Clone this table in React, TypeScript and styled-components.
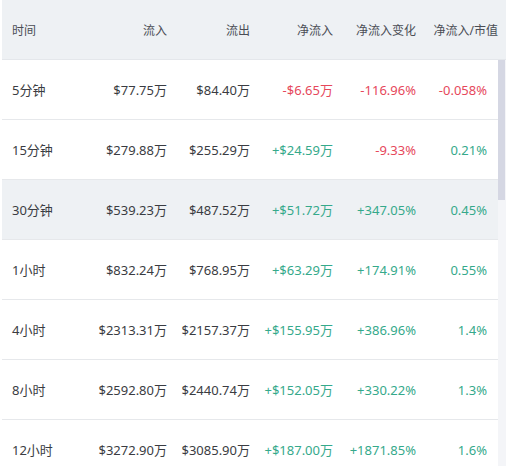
import React from 'react';
import styled, { createGlobalStyle } from 'styled-components';

type Tone = 'up' | 'down' | 'plain';

interface Flow {
    period: string;
    inflow: string;
    outflow: string;
    net: string;
    change: string;
    ratio: string;
    tone: Tone;
    changeTone?: Tone;
    active?: boolean;
}

const rows: Flow[] = [
    { period: '5分钟', inflow: '$77.75万', outflow: '$84.40万', net: '-$6.65万', change: '-116.96%', ratio: '-0.058%', tone: 'down' },
    { period: '15分钟', inflow: '$279.88万', outflow: '$255.29万', net: '+$24.59万', change: '-9.33%', ratio: '0.21%', tone: 'up', changeTone: 'down' },
    { period: '30分钟', inflow: '$539.23万', outflow: '$487.52万', net: '+$51.72万', change: '+347.05%', ratio: '0.45%', tone: 'up', active: true },
    { period: '1小时', inflow: '$832.24万', outflow: '$768.95万', net: '+$63.29万', change: '+174.91%', ratio: '0.55%', tone: 'up' },
    { period: '4小时', inflow: '$2313.31万', outflow: '$2157.37万', net: '+$155.95万', change: '+386.96%', ratio: '1.4%', tone: 'up' },
    { period: '8小时', inflow: '$2592.80万', outflow: '$2440.74万', net: '+$152.05万', change: '+330.22%', ratio: '1.3%', tone: 'up' },
    { period: '12小时', inflow: '$3272.90万', outflow: '$3085.90万', net: '+$187.00万', change: '+1871.85%', ratio: '1.6%', tone: 'up' },
];

const columns = '72px 83px 83px 83px 83px 1fr';

const GlobalStyle = createGlobalStyle`
    html, body {
        margin: 0;
        padding: 0;
        background: #ffffff;
    }
    body {
        font-family: "Noto Sans", "Noto Sans CJK SC", sans-serif;
    }
`;

const Page = styled.div`
    width: 506px;
    height: 466px;
    overflow: hidden;
    padding-left: 2px;
    box-sizing: border-box;
    display: flex;
    flex-direction: column;
`;

const HeaderRow = styled.div`
    display: grid;
    grid-template-columns: ${columns};
    align-items: center;
    height: 60px;
    box-sizing: border-box;
    padding: 0 8px 0 10px;
    background: #eef1f4;
    border-bottom: 1px solid #e4e7eb;
    color: #4a4d55;
    font-size: 12px;
`;

const HeadCell = styled.div<{ $left?: boolean }>`
    text-align: ${p => (p.$left ? 'left' : 'right')};
    white-space: nowrap;
`;

const Body = styled.div`
    display: flex;
    flex: 1;
    min-height: 0;
`;

const Rows = styled.div`
    flex: 1;
    overflow: hidden;
`;

const Row = styled.div<{ $active?: boolean }>`
    display: grid;
    grid-template-columns: ${columns};
    align-items: center;
    height: 60px;
    box-sizing: border-box;
    padding: 0 11px 0 10px;
    border-bottom: 1px solid #e6e8eb;
    background: ${p => (p.$active ? '#eef1f4' : '#ffffff')};
    color: #3a3c42;
    font-size: 13px;
`;

const Cell = styled.div<{ $tone?: Tone; $left?: boolean }>`
    text-align: ${p => (p.$left ? 'left' : 'right')};
    white-space: nowrap;
    color: ${p => (p.$tone === 'up' ? '#35a98b' : p.$tone === 'down' ? '#e6485b' : 'inherit')};
`;

const Track = styled.div`
    width: 8px;
    background: #f4f5f8;
    display: flex;
    flex-direction: column;
`;

const Thumb = styled.div`
    width: 7px;
    height: 140px;
    background: #d5d7e3;
`;

export default function App() {
    return (
        <Page>
            <GlobalStyle />
            <HeaderRow>
                <HeadCell $left>时间</HeadCell>
                <HeadCell>流入</HeadCell>
                <HeadCell>流出</HeadCell>
                <HeadCell>净流入</HeadCell>
                <HeadCell>净流入变化</HeadCell>
                <HeadCell>净流入/市值</HeadCell>
            </HeaderRow>
            <Body>
                <Rows>
                    {rows.map(r => (
                        <Row key={r.period} $active={r.active}>
                            <Cell $left>{r.period}</Cell>
                            <Cell>{r.inflow}</Cell>
                            <Cell>{r.outflow}</Cell>
                            <Cell $tone={r.tone}>{r.net}</Cell>
                            <Cell $tone={r.changeTone ?? r.tone}>{r.change}</Cell>
                            <Cell $tone={r.tone}>{r.ratio}</Cell>
                        </Row>
                    ))}
                </Rows>
                <Track>
                    <Thumb />
                </Track>
            </Body>
        </Page>
    );
}
